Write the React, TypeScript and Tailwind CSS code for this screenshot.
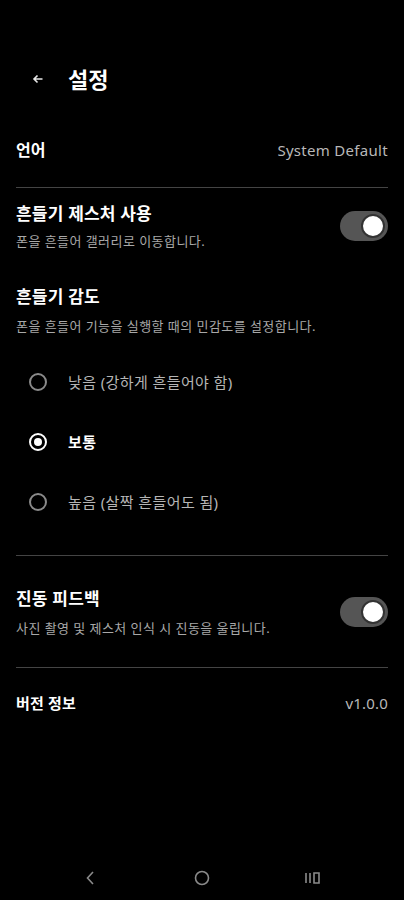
import React from 'react'

const font = { fontFamily: '"Noto Sans", "Noto Sans CJK KR", sans-serif' }

function Toggle() {
  return (
    <div className="w-[48px] h-[30px] rounded-full bg-[#555555] flex items-center justify-end px-[3px]">
      <div className="w-[24px] h-[24px] rounded-full bg-white border-2 border-[#333333]" />
    </div>
  )
}

function Radio({ label, selected }: { label: string; selected?: boolean }) {
  return (
    <div className="flex items-center h-[60px] pl-[29px]">
      <div
        className={`w-[18px] h-[18px] rounded-full border-2 flex items-center justify-center ${
          selected ? 'border-white' : 'border-[#8a8a8a]'
        }`}
      >
        {selected && <div className="w-[8px] h-[8px] rounded-full bg-white" />}
      </div>
      <span
        className={`ml-[21px] text-[15px] tracking-[0.4px] ${selected ? 'text-white font-bold' : 'text-[#b5b5b5]'}`}
      >
        {label}
      </span>
    </div>
  )
}

export default function App() {
  return (
    <div className="w-[404px] h-[900px] bg-black text-white flex flex-col" style={font}>
      {/* 상단 바 */}
      <div className="flex items-center h-[56px] mt-[51px] pl-[32px]">
        <svg width="12" height="12" viewBox="0 0 12 12" fill="none" stroke="#e8e8e8" strokeWidth="1.6">
          <path d="M10.5 6H2M5.5 2.5 2 6l3.5 3.5" />
        </svg>
        <span className="ml-[24px] text-[22px] font-bold">설정</span>
      </div>

      <div className="px-[16px] flex flex-col">
        {/* 언어 */}
        <div className="flex items-center justify-between h-[72px] mt-[7px]">
          <span className="text-[16px] font-bold">언어</span>
          <span className="text-[15px] tracking-[0.3px] text-[#b8b8b8]">System Default</span>
        </div>
        <div className="h-px bg-[#444444] mt-[1px]" />

        {/* 흔들기 제스처 */}
        <div className="flex items-center justify-between pt-[14px] pb-[13px]">
          <div className="flex flex-col">
            <span className="text-[17px] tracking-[0.2px] font-bold leading-[24px]">흔들기 제스처 사용</span>
            <span className="text-[13px] tracking-[0.45px] text-[#a8a8a8] leading-[18px] mt-[6px]">폰을 흔들어 갤러리로 이동합니다.</span>
          </div>
          <Toggle />
        </div>

        {/* 흔들기 감도 */}
        <div className="flex flex-col pt-[22px]">
          <span className="text-[17px] tracking-[0.2px] font-bold leading-[24px]">흔들기 감도</span>
          <span className="text-[13px] tracking-[0.45px] text-[#a8a8a8] leading-[18px] mt-[8px]">폰을 흔들어 기능을 실행할 때의 민감도를 설정합니다.</span>
        </div>
        <div className="flex flex-col mt-[17px] -mx-[16px]">
          <Radio label="낮음 (강하게 흔들어야 함)" />
          <Radio label="보통" selected />
          <Radio label="높음 (살짝 흔들어도 됨)" />
        </div>
        <div className="h-px bg-[#444444] mt-[23px]" />

        {/* 진동 피드백 */}
        <div className="flex items-center justify-between pt-[31px] pb-[30px]">
          <div className="flex flex-col">
            <span className="text-[17px] tracking-[0.2px] font-bold leading-[24px]">진동 피드백</span>
            <span className="text-[13px] tracking-[0.45px] text-[#a8a8a8] leading-[18px] mt-[8px]">사진 촬영 및 제스처 인식 시 진동을 울립니다.</span>
          </div>
          <Toggle />
        </div>
        <div className="h-px bg-[#444444]" />

        {/* 버전 정보 */}
        <div className="flex items-center justify-between h-[70px]">
          <span className="text-[15px] tracking-[0.2px] font-bold">버전 정보</span>
          <span className="text-[15px] tracking-[0.2px] text-[#b8b8b8]">v1.0.0</span>
        </div>
      </div>

      {/* 내비게이션 바 */}
      <div className="mt-auto h-[48px] flex items-center justify-center gap-[91px] mb-[-2px]">
        <div className="w-[20px] flex justify-center">
          <svg width="14" height="16" viewBox="0 0 14 16" fill="none" stroke="#8a8a8a" strokeWidth="1.6">
            <path d="M9 2 3.5 8 9 14" />
          </svg>
        </div>
        <div className="w-[20px] flex justify-center">
          <svg width="18" height="18" viewBox="0 0 18 18" fill="none" stroke="#8a8a8a" strokeWidth="1.6">
            <circle cx="9" cy="9" r="6.5" />
          </svg>
        </div>
        <div className="w-[20px] flex justify-center">
          <svg width="18" height="16" viewBox="0 0 18 16" fill="none" stroke="#8a8a8a" strokeWidth="1.6">
            <path d="M2 3v10M6 3v10M10 3h5v10h-5z" />
          </svg>
        </div>
      </div>
    </div>
  )
}
